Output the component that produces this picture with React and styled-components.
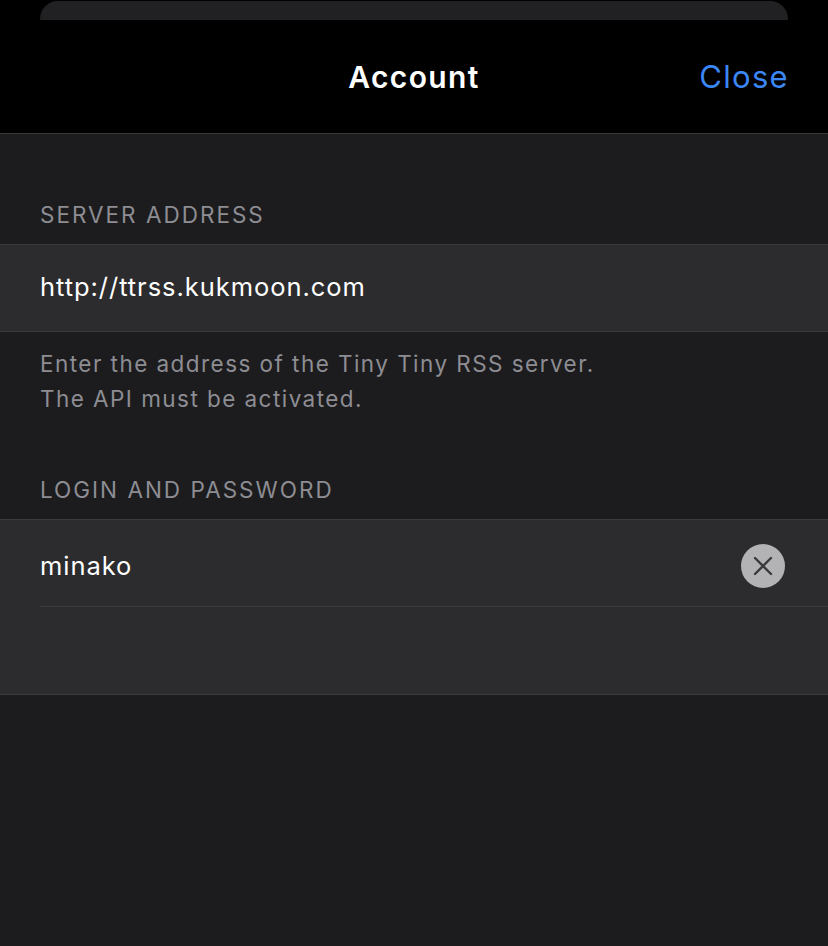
import React from "react";
import styled, { createGlobalStyle } from "styled-components";

const Global = createGlobalStyle`
  html, body { margin: 0; padding: 0; background: #1c1c1e; }
  body { font-family: Inter, "Noto Sans", "Liberation Sans", sans-serif; -webkit-font-smoothing: antialiased; }
  #root { min-height: 946px; background: #1c1c1e; }
`;

const Screen = styled.div`
  width: 828px;
  min-height: 946px;
  background: #1c1c1e;
  display: flex;
  flex-direction: column;
`;

const Top = styled.div`
  background: #000;
  padding: 1px 40px 0;
`;

const BehindSheet = styled.div`
  height: 19px;
  background: #212123;
  border-radius: 18px 18px 0 0;
`;

const NavBar = styled.header`
  background: #000;
  display: grid;
  grid-template-columns: 1fr auto 1fr;
  align-items: center;
  padding: 0 40px 0 40px;
  border-bottom: 1px solid #38383a;
  box-sizing: border-box;
  height: 114px;
`;

const Title = styled.h1`
  grid-column: 2;
  margin: 0;
  font-size: 30px;
  font-weight: 600;
  color: #fff;
  letter-spacing: 1.35px;
`;

const NavButton = styled.button`
  grid-column: 3;
  justify-self: end;
  background: none;
  border: 0;
  padding: 0;
  font-family: inherit;
  font-size: 31px;
  color: #3b87f6;
  letter-spacing: 1.3px;
  margin-right: -1px;
`;

const SectionHeader = styled.div`
  padding: ${(p) => p.$top}px 40px 15px;
  font-size: 22.5px;
  line-height: 28px;
  color: #8d8d93;
  text-transform: uppercase;
  letter-spacing: 2px;
`;

const Group = styled.div`
  background: #2c2c2e;
  border-top: 1px solid #3a3a3c;
  border-bottom: 1px solid #3a3a3c;
`;

const Row = styled.div`
  height: ${(p) => p.$height || 86}px;
  margin-left: 40px;
  padding-right: 43px;
  display: flex;
  align-items: center;
  justify-content: space-between;
  border-bottom: ${(p) => (p.$separator ? "1px solid #3a3a3c" : "none")};
`;

const Value = styled.span`
  font-size: 25.5px;
  color: #fff;
  letter-spacing: 0.95px;
  transform: translateY(${(p) => p.$shift || 0}px);
`;

const Footer = styled.div`
  padding: 14px 40px 0;
  font-size: 22.5px;
  line-height: 35px;
  color: #8d8d93;
  letter-spacing: 1.45px;
`;

const ClearButton = styled.button`
  width: 44px;
  height: 44px;
  margin-top: 6px;
  border-radius: 50%;
  border: 0;
  padding: 0;
  background: #b3b3b5;
  display: flex;
  align-items: center;
  justify-content: center;
`;

export default function App() {
  return (
    <>
      <Global />
      <Screen>
        <Top>
          <BehindSheet />
        </Top>
        <NavBar>
          <Title>Account</Title>
          <NavButton>Close</NavButton>
        </NavBar>
        <SectionHeader $top={67}>Server Address</SectionHeader>
        <Group>
          <Row>
            <Value $shift={-2}>http://ttrss.kukmoon.com</Value>
          </Row>
        </Group>
        <Footer>
          Enter the address of the Tiny Tiny RSS server.
          <br />
          The API must be activated.
        </Footer>
        <SectionHeader $top={60}>Login and Password</SectionHeader>
        <Group>
          <Row $separator>
            <Value $shift={2}>minako</Value>
            <ClearButton aria-label="Clear">
              <svg width="20" height="20" viewBox="0 0 20 20">
                <path d="M2 2 L18 18 M18 2 L2 18" stroke="#3a3a3c" strokeWidth="2.4" strokeLinecap="round" />
              </svg>
            </ClearButton>
          </Row>
          <Row $height={87} />
        </Group>
      </Screen>
    </>
  );
}
